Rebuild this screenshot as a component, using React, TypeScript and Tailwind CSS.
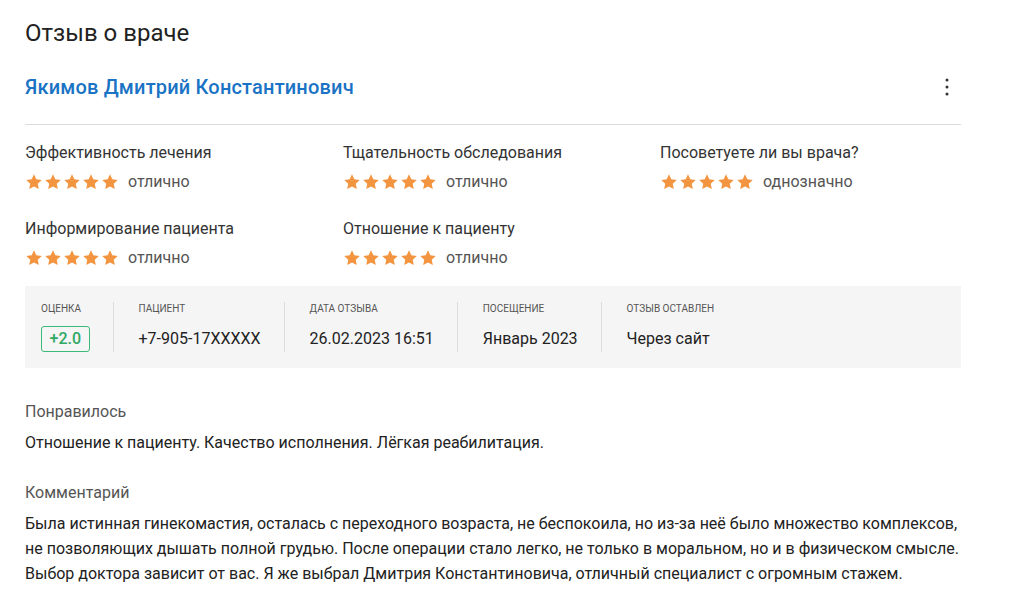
import React from "react";

function Star() {
  return (
    <svg width="18" height="18" viewBox="0 0 24 24" className="shrink-0">
      <path
        d="M12 1.8l3.1 6.6 7.2.9-5.3 5 1.4 7.1L12 17.9l-6.4 3.5 1.4-7.1-5.3-5 7.2-.9z"
        fill="#f39540"
      />
    </svg>
  );
}

function Rating({ label, value }: { label: string; value: string }) {
  return (
    <div>
      <div className="text-[16px] leading-[20px] text-[#333]">{label}</div>
      <div className="mt-[9px] flex h-[20px] items-center">
        <div className="flex gap-[1px]">
          <Star />
          <Star />
          <Star />
          <Star />
          <Star />
        </div>
        <span className="ml-[9px] text-[16px] text-[#555]">{value}</span>
      </div>
    </div>
  );
}

function Info({
  label,
  children,
  first,
  last,
}: {
  label: string;
  children: React.ReactNode;
  first?: boolean;
  last?: boolean;
}) {
  return (
    <div
      className={
        (first ? "" : "pl-[25px] ") +
        (last ? "" : "pr-[23px] border-r border-[#dcdcdc] ")
      }
    >
      <div className="text-[10px] leading-[14px] uppercase text-[#555]">{label}</div>
      <div className="mt-[10px] flex h-[26px] items-center text-[16px] text-[#222]">
        {children}
      </div>
    </div>
  );
}

export default function App() {
  return (
    <div
      className="min-h-[605px] w-[1011px] bg-white px-[25px] pt-[19px] text-[#222]"
      style={{ fontFamily: "Roboto, 'Noto Sans', sans-serif" }}
    >
      <div className="w-[936px]">
        <h1 className="text-[24px] leading-[28px] text-[#222]">Отзыв о враче</h1>

        <div className="mt-[28px] flex h-[24px] items-center justify-between">
          <span className="text-[20px] font-medium tracking-[0.18px] text-[#1a73c4]">
            Якимов Дмитрий Константинович
          </span>
          <svg width="16" height="20" viewBox="0 0 16 20" className="mr-[6px]">
            <circle cx="8" cy="3" r="1.5" fill="#333" />
            <circle cx="8" cy="10" r="1.5" fill="#333" />
            <circle cx="8" cy="17" r="1.5" fill="#333" />
          </svg>
        </div>

        <div className="mt-[25px] h-px bg-[#dcdcdc]" />

        <div className="mt-[18px] grid grid-cols-[318px_317px_1fr] gap-y-[27px]">
          <Rating label="Эффективность лечения" value="отлично" />
          <Rating label="Тщательность обследования" value="отлично" />
          <Rating label="Посоветуете ли вы врача?" value="однозначно" />
          <Rating label="Информирование пациента" value="отлично" />
          <Rating label="Отношение к пациенту" value="отлично" />
        </div>

        <div className="mt-[18px] flex bg-[#f5f5f5] px-[16px] pt-[16px] pb-[16px]">
          <Info label="Оценка" first>
            <span className="rounded-[3px] border border-[#3cb878] px-[7.5px] leading-[24px] font-medium text-[#2fa866]">
              +2.0
            </span>
          </Info>
          <Info label="Пациент">+7-905-17XXXXX</Info>
          <Info label="Дата отзыва">26.02.2023 16:51</Info>
          <Info label="Посещение">Январь 2023</Info>
          <Info label="Отзыв оставлен" last>
            Через сайт
          </Info>
        </div>

        <div className="mt-[34px] text-[16px] leading-[20px] text-[#555]">Понравилось</div>
        <div className="mt-[11px] text-[16px] leading-[20px] text-[#222]">
          Отношение к пациенту. Качество исполнения. Лёгкая реабилитация.
        </div>

        <div className="mt-[30px] text-[16px] leading-[20px] text-[#555]">Комментарий</div>
        <div className="mt-[8px] w-[980px] text-[16px] leading-[25px] text-[#222]">
          <div className="whitespace-nowrap">
            Была истинная гинекомастия, осталась с переходного возраста, не беспокоила, но из-за неё было множество комплексов,
          </div>
          <div className="whitespace-nowrap">
            не позволяющих дышать полной грудью. После операции стало легко, не только в моральном, но и в физическом смысле.
          </div>
          <div className="whitespace-nowrap">
            Выбор доктора зависит от вас. Я же выбрал Дмитрия Константиновича, отличный специалист с огромным стажем.
          </div>
        </div>
      </div>
    </div>
  );
}
